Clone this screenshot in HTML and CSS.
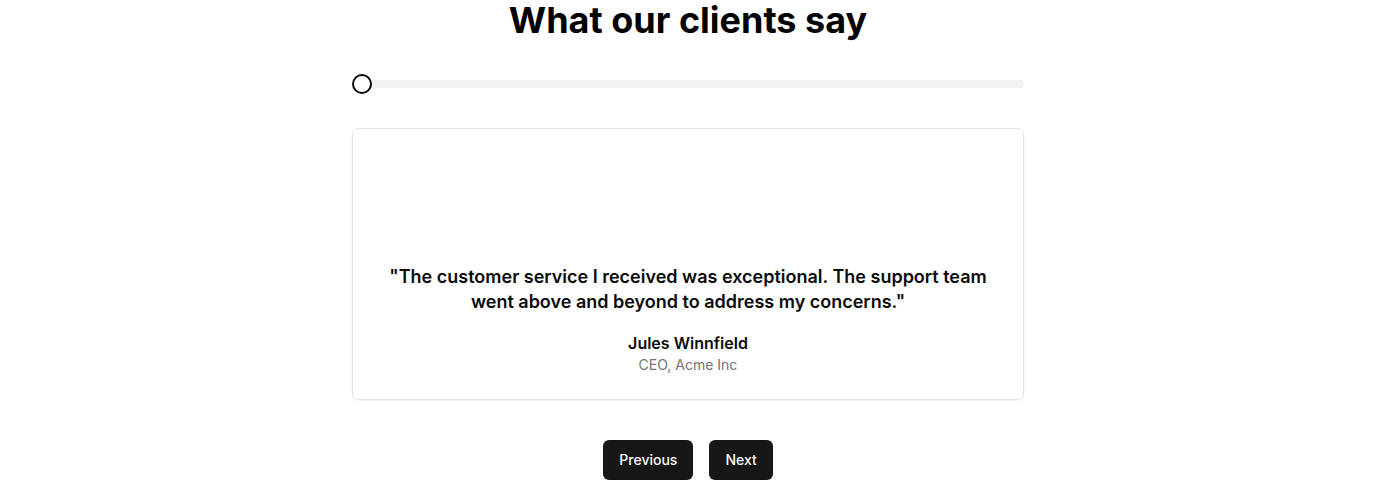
FILE: index.html
```html
<!DOCTYPE html>
<html lang="en">
<head>
<meta charset="utf-8">
<title>What our clients say</title>
<link rel="stylesheet" href="styles.css">
</head>
<body>
<main class="page">
  <section class="testimonials">
    <h2 class="title">What our clients say</h2>
    <div class="slider">
      <div class="track"></div>
      <div class="thumb"></div>
    </div>
    <article class="card">
      <div class="avatar"></div>
      <p class="quote">"The customer service I received was exceptional. The support team went above and beyond to address my concerns."</p>
      <p class="name">Jules Winnfield</p>
      <p class="role">CEO, Acme Inc</p>
    </article>
    <div class="actions">
      <button class="btn" type="button">Previous</button>
      <button class="btn" type="button">Next</button>
    </div>
  </section>
</main>
</body>
</html>
```
FILE: styles.css
```css
* { box-sizing: border-box; }
html, body { margin: 0; padding: 0; background: #fff; }
body {
  font-family: Inter, "Noto Sans", "Liberation Sans", sans-serif;
  color: #0a0a0a;
}
.page {
  display: flex;
  justify-content: center;
}
.testimonials {
  width: 672px;
  display: flex;
  flex-direction: column;
  align-items: stretch;
}
.title {
  margin: 0;
  font-size: 36px;
  line-height: 40px;
  font-weight: 700;
  text-align: center;
  color: #000;
}
.slider {
  position: relative;
  margin-top: 40px;
  height: 8px;
}
.track {
  height: 8px;
  border-radius: 4px;
  background: #f2f2f2;
}
.thumb {
  position: absolute;
  left: 0;
  top: -6px;
  width: 20px;
  height: 20px;
  border-radius: 50%;
  border: 2px solid #0a0a0a;
  background: #fff;
}
.card {
  margin-top: 40px;
  border: 1px solid #e5e5e5;
  border-radius: 6px;
  box-shadow: 0 1px 2px rgba(0,0,0,0.05);
  padding: 24px;
  display: flex;
  flex-direction: column;
  align-items: center;
  text-align: center;
}
.avatar {
  width: 96px;
  height: 96px;
  margin-bottom: 15px;
}
.quote {
  margin: 0;
  font-size: 18px;
  line-height: 25px;
  font-weight: 600;
  color: #0a0a0a;
}
.name {
  margin: 17px 0 0;
  font-size: 16px;
  line-height: 24px;
  font-weight: 600;
  color: #0a0a0a;
}
.role {
  margin: 0;
  font-size: 14px;
  line-height: 20px;
  color: #737373;
}
.actions {
  margin-top: 40px;
  display: flex;
  justify-content: center;
  gap: 16px;
}
.btn {
  display: flex;
  align-items: center;
  justify-content: center;
  height: 40px;
  padding: 0 16px 1px;
  border: none;
  border-radius: 6px;
  background: #171717;
  color: #fafafa;
  font-family: inherit;
  font-size: 14px;
  line-height: 20px;
  font-weight: 500;
  cursor: pointer;
}
```
